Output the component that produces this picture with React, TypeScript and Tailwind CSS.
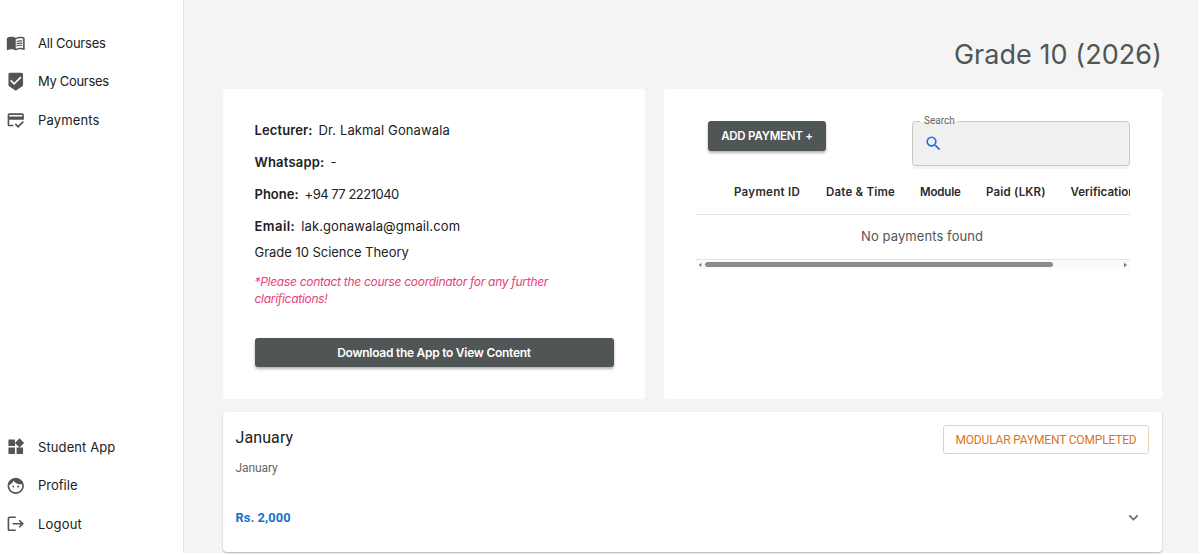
import React from 'react';
import type { IconType } from 'react-icons';
import {
  MdBeenhere,
  MdCreditScore,
  MdExpandMore,
  MdFace,
  MdLogout,
  MdMenuBook,
  MdSearch,
  MdWidgets,
} from 'react-icons/md';

type NavItem = { label: string; icon: IconType; text: string };

const topNav: NavItem[] = [
  { label: 'All Courses', icon: MdMenuBook, text: 'tracking-[-0.22px]' },
  { label: 'My Courses', icon: MdBeenhere, text: 'tracking-[-0.32px]' },
  { label: 'Payments', icon: MdCreditScore, text: 'tracking-[0.15px]' },
];

const bottomNav: NavItem[] = [
  { label: 'Student App', icon: MdWidgets, text: 'tracking-[0.1px]' },
  { label: 'Profile', icon: MdFace, text: 'tracking-[0px]' },
  { label: 'Logout', icon: MdLogout, text: 'tracking-[0.2px]' },
];

const details = [
  { label: 'Lecturer:', value: 'Dr. Lakmal Gonawala', labelText: 'tracking-[0.12px]', text: 'tracking-[0.12px]' },
  { label: 'Whatsapp:', value: '-', labelText: 'tracking-[0.2px]', text: 'tracking-[0px]' },
  { label: 'Phone:', value: '+94 77 2221040', labelText: 'tracking-[0px]', text: 'tracking-[-0.5px]' },
  { label: 'Email:', value: 'lak.gonawala@gmail.com', labelText: 'tracking-[0.45px]', text: 'tracking-[0.12px]' },
];

const columns = [
  { label: 'Payment ID', width: 'w-[92px]', text: 'tracking-[0.3px]' },
  { label: 'Date & Time', width: 'w-[94px]', text: 'tracking-[0.2px]' },
  { label: 'Module', width: 'w-[66px]', text: 'tracking-[-0.15px]' },
  { label: 'Paid (LKR)', width: 'w-[84.5px]', text: 'tracking-[0.2px]' },
  { label: 'Verification', width: 'w-[90px]', text: 'tracking-[0.05px]' },
];

function NavList({ items }: { items: NavItem[] }) {
  return (
    <ul>
      {items.map(({ label, icon: Icon, text }) => (
        <li key={label} className="flex h-[38.3px] items-center gap-[13px] pl-[5.5px]">
          <Icon className="size-[19.5px] shrink-0 text-[#505556]" />
          <span className={`whitespace-nowrap text-[13px] leading-5 text-[#212121] ${text}`}>{label}</span>
        </li>
      ))}
    </ul>
  );
}

function Sidebar() {
  return (
    <nav className="flex h-[553px] w-[184px] shrink-0 flex-col justify-between border-r border-[#e4e4e4] bg-white pt-6 pb-[10.2px]">
      <NavList items={topNav} />
      <NavList items={bottomNav} />
    </nav>
  );
}

function LecturerCard() {
  return (
    <section className="h-[310px] w-[422.5px] rounded-[4px] bg-white px-8 pt-[25px]">
      {details.map((d) => (
        <p key={d.label} className="flex h-8 items-center gap-[6px] whitespace-nowrap text-[13px] leading-5 text-[#212121]">
          <span className={`font-semibold ${d.labelText}`}>{d.label}</span>
          <span className={d.text}>{d.value}</span>
        </p>
      ))}
      <p className="text-[13px] leading-5 tracking-[-0.03px] text-[#212121]">Grade 10 Science Theory</p>
      <p className="mt-3 text-[12px] leading-[16.7px] tracking-[-0.29px] text-[#e6407a] italic">
        *Please contact the course coordinator for any further
        <br />
        clarifications!
      </p>
      <button className="mt-[31px] flex h-[29px] w-[359px] items-center justify-center rounded-[3px] bg-[#505556] text-[12px] font-semibold tracking-[-0.27px] text-white shadow-[0_2px_3px_rgba(0,0,0,0.3)]">
        Download the App to View Content
      </button>
    </section>
  );
}

function SearchBox() {
  return (
    <div className="relative flex h-[45px] w-[218px] items-center rounded-[4px] border border-[#c8c8c8] bg-[#f0f0f0] pl-[11px] shadow-[0_3px_1px_#f2f2f2]">
      <MdSearch className="size-[19px] text-[#1a73e8]" />
      <div className="absolute -top-px left-[7px] h-px w-[37px] bg-white" />
      <span className="absolute -top-[8px] left-[11px] font-[Roboto] text-[10px] leading-[14px] text-[#666]">Search</span>
    </div>
  );
}

function PaymentsCard() {
  return (
    <section className="h-[310px] w-[498px] rounded-[4px] bg-white px-8 pt-8">
      <div className="flex items-start justify-between pl-3">
        <button className="flex h-[30px] w-[118px] items-center justify-center rounded-[3px] bg-[#505556] pt-px text-[11.5px] font-semibold tracking-[-0.22px] text-white shadow-[0_2px_3px_rgba(0,0,0,0.3)]">
          ADD PAYMENT +
        </button>
        <SearchBox />
      </div>
      <div className="mt-[5px] w-[434px] overflow-hidden">
        <div className="flex h-[44px] items-center border-b border-[#e4e4e4] pt-px pl-[38px] text-[11.5px] font-semibold text-[#2a2a2a]">
          {columns.map((c) => (
            <span key={c.label} className={`shrink-0 whitespace-nowrap ${c.width} ${c.text}`}>
              {c.label}
            </span>
          ))}
        </div>
        <div className="flex h-[45px] items-center border-b border-[#e4e4e4] pl-[165px] text-[13px] tracking-[0.09px] text-[#555]">
          No payments found
        </div>
        <div className="flex h-[9px] items-center bg-[#fafafa]">
          <svg viewBox="0 0 10 8" className="h-2 w-[9px] shrink-0 fill-[#777]">
            <path d="M3 4 6 1.8v4.4z" />
          </svg>
          <div className="h-[5px] w-[348px] rounded-full bg-[#8a8a8a]" />
          <svg viewBox="0 0 10 8" className="ml-auto h-2 w-[10px] shrink-0 fill-[#777]">
            <path d="M7 4 4 1.8v4.4z" />
          </svg>
        </div>
      </div>
    </section>
  );
}

function MonthCard() {
  return (
    <section className="flex h-[140px] justify-between rounded-[4px] bg-white px-[13px] font-[Roboto] shadow-[0_1px_2px_rgba(0,0,0,0.28)]">
      <div className="pt-[14px]">
        <h2 className="text-[16px] leading-6 tracking-[0.1px] text-[#212121]">January</h2>
        <p className="mt-[9px] text-[12px] leading-[18px] tracking-[-0.1px] text-[#666]">January</p>
        <p className="mt-[31px] text-[12.8px] leading-5 font-bold tracking-[0.1px] text-[#1a70c8]">Rs. 2,000</p>
      </div>
      <div className="flex flex-col items-end pt-[13px]">
        <span className="flex h-[29px] w-[206px] items-center justify-center rounded-[3px] border border-[#f3cfae] text-[12px] tracking-[-0.17px] text-[#dc7423]">
          MODULAR PAYMENT COMPLETED
        </span>
        <MdExpandMore className="mt-[54px] mr-[6.5px] size-[19px] text-[#666]" />
      </div>
    </section>
  );
}

export default function App() {
  return (
    <div className="h-[555px] w-[1200px] overflow-hidden bg-white font-['Inter',sans-serif]">
      <div className="flex h-[553px] w-[1198px] bg-[#f4f4f4]">
        <Sidebar />
        <main className="w-[978px] shrink-0 pl-[38.5px]">
          <h1 className="h-[89px] pt-[37px] text-right text-[27px] leading-9 tracking-[0.05px] whitespace-nowrap text-[#505556]">
            Grade 10 (2026)
          </h1>
          <div className="flex justify-between">
            <LecturerCard />
            <PaymentsCard />
          </div>
          <div className="mt-[13px]">
            <MonthCard />
          </div>
        </main>
      </div>
    </div>
  );
}
